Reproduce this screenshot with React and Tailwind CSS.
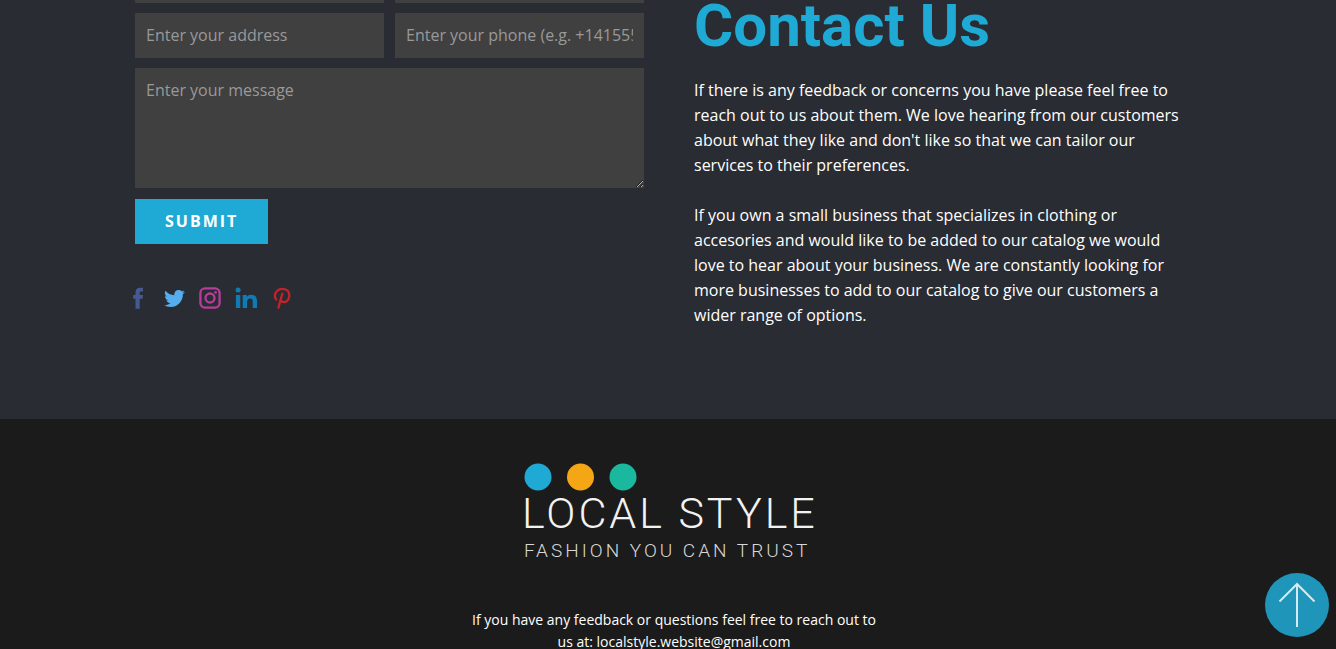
import React, { useState } from 'react';
import { FaTwitter } from 'react-icons/fa';

const FIELD = 'w-full bg-[#404040] px-[11px] text-base text-white placeholder:text-[#999999] focus:outline-none';

function FacebookIcon() {
  return (
    <svg viewBox="0 0 22 22" className="h-[22px] w-[22px]" fill="currentColor">
      <path d="M8.500 21.700V11.700H6.200V8H8.500V5.600C8.500 2.500 10 .8 13 .8H16V4.500H14.100C13 4.500 12.700 4.900 12.700 6V8H16L15.600 11.700H12.700V21.700Z" />
    </svg>
  );
}

function InstagramIcon() {
  return (
    <svg viewBox="0 0 22 22" className="h-[22px] w-[22px]" fill="none" stroke="currentColor" strokeWidth="2.3">
      <rect x="1.400" y="1.400" width="19.200" height="19.200" rx="4.500" />
      <circle cx="11" cy="11" r="4.500" />
      <circle cx="16.600" cy="5.400" r="1.400" fill="currentColor" stroke="none" />
    </svg>
  );
}

function LinkedInIcon() {
  return (
    <svg viewBox="0 0 22 22" className="h-[22px] w-[22px]" fill="currentColor">
      <circle cx="3.100" cy="3" r="2.500" />
      <path d="M.9 8H5.300V21H.9Z" />
      <path d="M7.700 8H11.900V9.800C12.700 8.500 14.200 7.700 16.100 7.700C20.200 7.700 22 10 22 14V21H17.700V14.800C17.700 12.700 17.200 11.500 15.300 11.500C13 11.500 12.100 12.900 12.100 15V21H7.700Z" />
    </svg>
  );
}

function PinterestIcon() {
  return (
    <svg
      viewBox="0 0 22 22"
      className="h-[22px] w-[22px]"
      fill="none"
      stroke="currentColor"
      strokeWidth="2.3"
      strokeLinecap="round"
      strokeLinejoin="round"
    >
      <path d="M5.200 12.600C3.200 10.400 3.400 6.400 6 4C9 1.200 14.400 1.300 16.900 4.100C19.400 7 18.400 12.200 15.800 14.200C13.600 15.800 10.800 15.200 9.800 13.200" />
      <path d="M11.400 6.600L7.400 20.600" />
    </svg>
  );
}

const SOCIALS = [
  { name: 'Facebook', color: 'text-[#475993]', icon: <FacebookIcon /> },
  { name: 'Twitter', color: 'text-[#55acee]', icon: <FaTwitter size={21} /> },
  { name: 'Instagram', color: 'text-[#b73d9b]', icon: <InstagramIcon /> },
  { name: 'LinkedIn', color: 'text-[#0f7bb5]', icon: <LinkedInIcon /> },
  { name: 'Pinterest', color: 'text-[#c2232c]', icon: <PinterestIcon /> },
];

function ContactForm() {
  const [values, setValues] = useState({ name: '', email: '', address: '', phone: '', message: '' });

  const handleChange = (e) => {
    setValues({ ...values, [e.target.name]: e.target.value });
  };

  return (
    <form onSubmit={(e) => e.preventDefault()}>
      <div className="grid grid-cols-2 gap-x-[11px] gap-y-[10px]">
        <input aria-label="Name" name="name" value={values.name} onChange={handleChange} className={`${FIELD} h-[45px] pb-0.5`} />
        <input
          aria-label="Email"
          name="email"
          type="email"
          value={values.email}
          onChange={handleChange}
          className={`${FIELD} h-[45px] pb-0.5`}
        />
        <input
          aria-label="Address"
          name="address"
          placeholder="Enter your address"
          value={values.address}
          onChange={handleChange}
          className={`${FIELD} h-[45px] pb-0.5`}
        />
        <input
          aria-label="Phone"
          name="phone"
          type="tel"
          placeholder="Enter your phone (e.g. +14155552675)"
          value={values.phone}
          onChange={handleChange}
          className={`${FIELD} h-[45px] pb-0.5`}
        />
        <textarea
          aria-label="Message"
          name="message"
          placeholder="Enter your message"
          value={values.message}
          onChange={handleChange}
          className={`${FIELD} col-span-2 block h-[120px] resize py-[10px]`}
        />
      </div>
      <button type="submit" className="mt-[11px] h-[45px] bg-[#1eaad5] px-[30px] pb-0.5 text-base font-bold tracking-[2px] text-white">
        SUBMIT
      </button>
    </form>
  );
}

function Logo() {
  return (
    <svg viewBox="0 0 300 104" className="h-[104px] w-[300px]" role="img" aria-label="Local Style">
      <circle cx="20" cy="14" r="13.500" fill="#1eaad5" />
      <circle cx="62.500" cy="14" r="13.500" fill="#f5a614" />
      <circle cx="105" cy="14" r="13.500" fill="#1ab99f" />
      <text x="4" y="65" className="fill-[#f2f2f2] font-['Roboto',sans-serif] text-[43px] font-light tracking-[3px]">
        LOCAL STYLE
      </text>
      <text x="6" y="94" className="fill-[#d8d8d8] font-['Roboto',sans-serif] text-[19px] font-light tracking-[3px]">
        FASHION YOU CAN TRUST
      </text>
    </svg>
  );
}

function App() {
  return (
    <div className="h-screen overflow-hidden bg-[#1b1b1b] font-['Open_Sans',sans-serif] text-white">
      <section className="-mt-[42px] bg-[#292c33] pb-[91px] pl-0.5">
        <div className="mx-auto grid max-w-[1068px] grid-cols-2 gap-[50px]">
          <div>
            <ContactForm />
            <div className="mt-[43px] -ml-2 flex gap-[14px]">
              {SOCIALS.map((s) => (
                <a
                  key={s.name}
                  href="#"
                  aria-label={s.name}
                  className={`flex h-[22px] w-[22px] items-center justify-center ${s.color}`}
                >
                  {s.icon}
                </a>
              ))}
            </div>
          </div>

          <div className="max-w-[492px] pt-[38px]">
            <h2 className="font-['Roboto',sans-serif] text-[60px] leading-[60px] font-bold text-[#1eaad5]">Contact Us</h2>
            <div className="mt-[22px] space-y-[25px] text-base leading-[25px]">
              <p>
                If there is any feedback or concerns you have please feel free to reach out to us about them. We love
                hearing from our customers about what they like and don't like so that we can tailor our services to
                their preferences.
              </p>
              <p>
                If you own a small business that specializes in clothing or accesories and would like to be added to
                our catalog we would love to hear about your business. We are constantly looking for more businesses to
                add to our catalog to give our customers a wider range of options.
              </p>
            </div>
          </div>
        </div>
      </section>

      <footer className="flex flex-col items-center pt-11">
        <Logo />
        <p className="mt-[42px] ml-3 max-w-[416px] text-center text-sm leading-[22px]">
          If you have any feedback or questions feel free to reach out to us at: localstyle.website@gmail.com
        </p>
      </footer>

      <a
        href="#"
        aria-label="Back to top"
        className="fixed right-[7px] bottom-3 flex h-16 w-16 items-center justify-center rounded-full bg-[#1f95b9]"
      >
        <svg viewBox="0 0 64 64" className="h-16 w-16" fill="none" stroke="#d5eaf1" strokeWidth="2">
          <path d="M32 54V11M14.500 28.500L32 11L49.500 28.500" />
        </svg>
      </a>
    </div>
  );
}

export default App;
